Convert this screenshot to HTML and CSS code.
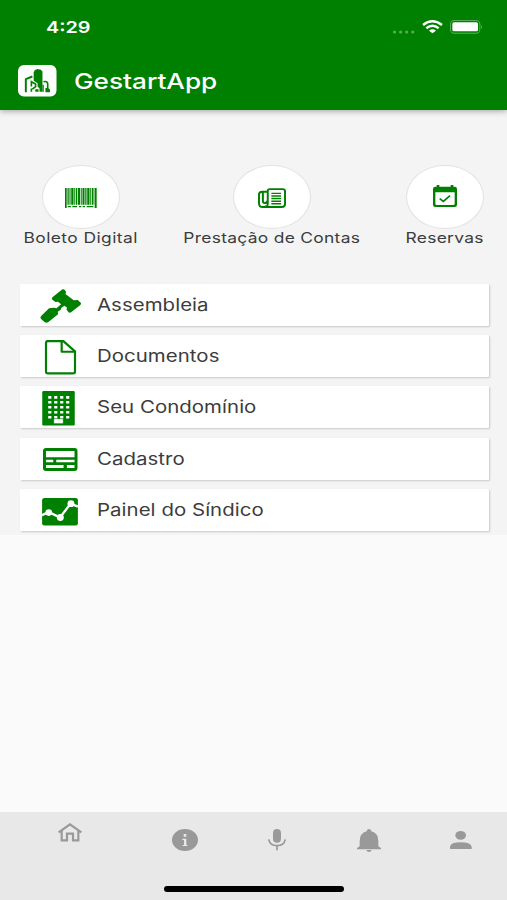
FILE: index.html
```html
<!DOCTYPE html>
<html lang="pt-BR">
<head>
<meta charset="utf-8">
<meta name="viewport" content="width=device-width">
<title>GestartApp</title>
<link rel="stylesheet" href="styles.css">
</head>
<body>
<header class="header">
  <div class="status">
    <span class="time wide">4:29</span>
    <div class="signals">
      <svg class="dots" viewBox="0 0 24 4"><g fill="#fff" opacity=".35"><circle cx="2.5" cy="2" r="1.6"/><circle cx="8.6" cy="2" r="1.6"/><circle cx="14.7" cy="2" r="1.6"/><circle cx="20.8" cy="2" r="1.6"/></g></svg>
      <svg class="wifi" viewBox="0 0 63 40" fill="none" stroke="#fff" stroke-width="7.5"><path d="M3 15Q31 -7 60 15"/><path d="M13 25Q31 10 50 25"/><path d="M21 32Q31 23 42 32L31.500 40Z" fill="#fff" stroke="none"/></svg>
      <svg class="battery" viewBox="0 0 98 41"><rect x="1.500" y="1.500" width="88" height="38" rx="11" fill="none" stroke="#fff" stroke-width="3" opacity=".35"/><rect x="7" y="7" width="77" height="27" rx="5" fill="#fff"/><path d="M93 15q5 6 0 12z" fill="#fff" opacity=".5"/></svg>
    </div>
  </div>
  <div class="brand">
    <svg class="logo" viewBox="0 0 118 96"><rect width="118" height="96" rx="18" fill="#fff"/><path fill="#008000" d="M48 22L52 15L60 12L70 14L75 20V82H66V72L60 66V56L48 48Z"/><path d="M24 83V43L44 35" fill="none" stroke="#008000" stroke-width="6"/><path d="M41 82V72M41 66V51L54 58V66L44 74" fill="none" stroke="#008000" stroke-width="5"/><path fill="#008000" d="M53 74H63V82H53ZM84 70H93L98 75V83H84Z"/><path d="M78 51Q90 48 91 57V70" fill="none" stroke="#008000" stroke-width="5"/><path d="M77 82V60" fill="none" stroke="#008000" stroke-width="4"/></svg>
    <h1 class="title wide">GestartApp</h1>
  </div>
</header>

<main class="home">
  <nav class="shortcuts">
    <a class="shortcut digital">
      <span class="bubble"><svg class="barcode" viewBox="0 0 96 60"><g fill="#008000"><path d="M0 0h5v60H0zM8 0h3v50H8zM14 0h2v50h-2zM19 0h6v50h-6zM28 0h2v50h-2zM33 0h3v50h-3zM39 0h6v50h-6zM48 0h2v50h-2zM53 0h5v50h-5zM61 0h3v50h-3zM67 0h6v50h-6zM76 0h2v50h-2zM81 0h4v50h-4zM89 0h6v60h-6z"/><path d="M8 54h10v4H8zM22 54h14v4H22zM42 54h7v4h-7zM53 54h7v4h-7zM65 54h20v4H65z"/></g><path d="M5 0h84v50H5z" fill="#008000" opacity=".3"/></svg></span>
      <span class="caption wide">Boleto Digital</span>
    </a>
    <a class="shortcut contas">
      <span class="bubble"><svg class="news" viewBox="0 0 86 62" fill="none" stroke="#008000" stroke-width="6"><path d="M30 10V8Q30 3 36 3H76Q83 3 83 10V49Q83 58 73 58H15Q3 58 3 46V20Q3 11 13 11H27M30 10V48Q30 58 20 56M15 12V39Q15 46 21 46T28 39"/><path stroke-width="4.500" d="M41 16H71M41 24H71M41 32H71M41 40H71M41 48H71"/></svg></span>
      <span class="caption wide">Prestação de Contas</span>
    </a>
    <a class="shortcut reservas">
      <span class="bubble"><svg class="calendar" viewBox="0 0 72 66"><path fill="#008000" fill-rule="evenodd" d="M11 0h8v5h34V0h8v5h4q7 0 7 7v47q0 7-7 7H7q-7 0-7-7V12q0-7 7-7h4zM7 22v34q0 4 4 4h50q4 0 4-4V22z"/><path d="M20 41L31 49L51 32" fill="none" stroke="#008000" stroke-width="5"/></svg></span>
      <span class="caption wide">Reservas</span>
    </a>
  </nav>

  <ul class="menu">
    <li class="card"><span class="glyph"><svg class="gavel" viewBox="91 41 124 102"><path fill="#008000" d="M158 42Q162 40 166 45L169 50L167 56L192 75L204 74L213 82Q216 86 211 90L184 111Q179 114 175 109L170 102L172 97L164 91L155 97L153 103L144 109L145 117L116 140Q110 145 104 140L94 131Q89 126 95 121L118 99L132 97L140 99L154 87L145 79L137 80L128 73Q124 69 129 65Z"/></svg></span><span class="label wide">Assembleia</span></li>
    <li class="card"><span class="glyph"><svg class="file" viewBox="0 0 93 103" fill="none" stroke="#008000" stroke-width="6.500" stroke-linejoin="round"><path d="M8 3H55L90 34V95Q90 100 84 100H9Q3 100 3 95V9Q3 3 8 3Z"/><path d="M50 4V35H89"/></svg></span><span class="label wide">Documentos</span></li>
    <li class="card"><span class="glyph"><svg class="building" viewBox="0 0 98 104"><rect width="98" height="104" rx="4" fill="#008000"/><path d="M18 19H82M18 34H82M18 49H82M18 64H82M18 79H82" stroke="#fff" stroke-width="8" stroke-dasharray="9.500 8.500"/><path d="M35 84h28v14H35z" fill="#fff" stroke="#008000" stroke-width="1"/></svg></span><span class="label wide">Seu Condomínio</span></li>
    <li class="card"><span class="glyph"><svg class="form" viewBox="0 0 104 69"><path fill="#008000" fill-rule="evenodd" d="M9 0H95Q104 0 104 9V60Q104 69 95 69H9Q0 69 0 60V9Q0 0 9 0ZM9 9V28H95V9ZM9 35V43H31V35ZM40 35V43H95V35ZM9 51V60H62V51ZM72 51V60H95V51Z"/></svg></span><span class="label wide">Cadastro</span></li>
    <li class="card"><span class="glyph"><svg class="chart" viewBox="0 0 108 83"><rect width="108" height="83" rx="7" fill="#008000"/><g fill="#fff"><path d="M0 52L19 42L54 59L86 17L108 26" fill="none" stroke="#fff" stroke-width="7"/><circle cx="20" cy="44" r="10"/><circle cx="55" cy="59" r="10.500"/><circle cx="87" cy="17" r="10.500"/></g></svg></span><span class="label wide">Painel do Síndico</span></li>
  </ul>
</main>

<footer class="tabs">
  <nav class="tabrow">
    <svg class="tab house" viewBox="0 0 72 56" fill="none" stroke="#999" stroke-width="6.500"><path d="M2 28L36 4L70 28M11 24V52H27V32H45V52H61V24"/></svg>
    <svg class="tab info" viewBox="0 0 78 66"><ellipse cx="39" cy="33" rx="39" ry="33" fill="#999"/><path d="M35 15h8v8h-8zM31 29h12v19h3v3H32v-3h4V33h-5z" fill="#e8e8e8"/></svg>
    <svg class="tab mic" viewBox="0 0 54 64"><rect x="15" width="24" height="41" rx="12" fill="#999"/><path d="M2 31Q6 50 27 50T52 31M27 50V64" fill="none" stroke="#999" stroke-width="5"/></svg>
    <svg class="tab bell" viewBox="0 0 72 69" fill="#999"><path d="M29 7Q30 0 36 0T43 7Q64 13 64 36V52L72 57V61H0V57L8 52V36Q8 13 29 7ZM28 63H44Q42 69 36 69T28 63Z"/></svg>
    <svg class="tab person" viewBox="0 0 65 54" fill="#999"><ellipse cx="32" cy="13" rx="16" ry="13"/><path d="M0 54V47Q2 34 32 34T65 47V54Z"/></svg>
  </nav>
  <div class="indicator"></div>
</footer>
</body>
</html>
```
FILE: styles.css
```css
* { box-sizing: border-box; }
body {
  margin: 0;
  width: 507px;
  height: 900px;
  display: flex;
  flex-direction: column;
  background: #fafafa;
  font-family: Inter, "Liberation Sans", sans-serif;
  color: #3c3c3c;
  overflow: hidden;
}
svg { display: block; overflow: visible; flex: none; }
.wide { display: inline-block; white-space: nowrap; transform: scaleX(1.2); transform-origin: left center; }

.header {
  height: 110px;
  flex: none;
  background: #008000;
  color: #fff;
  box-shadow: 0 1px 6px rgba(0, 0, 0, .35);
  z-index: 1;
}
.status { height: 54px; display: flex; justify-content: space-between; align-items: center; padding: 0 24px 0 46px; }
.time { font-size: 16.500px; font-weight: 600; line-height: 20px; }
.signals { display: flex; align-items: center; }
.dots { width: 24px; height: 4px; margin: 9px 6px 0 0; }
.wifi { width: 21px; height: 13.300px; margin-right: 7px; }
.battery { width: 32.700px; height: 13.700px; }
.brand { height: 54px; display: flex; align-items: center; padding-left: 18px; gap: 17px; }
.logo { width: 38.500px; height: 31.500px; }
.title { margin: 0; font-size: 21.800px; font-weight: 500; line-height: 28px; }

.home { height: 425px; flex: none; padding: 55px 18px 0 19px; background: #f4f4f4; }
.shortcuts { display: flex; justify-content: space-between; padding: 0 5px; }
.shortcut { display: flex; flex-direction: column; align-items: center; }
.digital { width: 114px; }
.contas { width: 177px; }
.reservas { width: 78px; }
.bubble {
  width: 78px;
  height: 64px;
  display: flex;
  align-items: center;
  justify-content: center;
  border: 1px solid #e2e2e2;
  border-radius: 50%;
  background: #fff;
}
.caption { font-size: 14.500px; line-height: 18px; letter-spacing: .25px; transform-origin: center; }
.digital .caption { letter-spacing: .35px; }
.contas { position: relative; left: -.5px; }
.barcode { width: 32px; height: 20px; margin-top: 2px; }
.news { width: 28px; height: 20.500px; margin-top: 2px; }
.calendar { width: 24px; height: 22px; margin-bottom: 3px; }

.menu { list-style: none; margin: 37px 0 0; padding: 0 0 0 1px; display: grid; gap: 9.200px; }
.card {
  height: 42px;
  display: flex;
  align-items: center;
  background: #fff;
  box-shadow: 1px 1px 2px rgba(0, 0, 0, .18);
  border-radius: 1px;
}
.glyph { width: 77px; padding-left: 2px; display: flex; justify-content: center; }
.label { font-size: 17px; line-height: 20px; letter-spacing: .04px; }
.gavel { width: 41.500px; height: 34px; margin: 1px 0 0 3px; }
.file { width: 31px; height: 34.500px; margin: 3px 0 0 2px; }
.building { width: 33px; height: 34.500px; margin: 1px 2px 0 0; }
.form { width: 34.500px; height: 23px; margin: 2px 0 0 2px; }
.chart { width: 36px; height: 27.500px; margin: 4px 0 0; }

.tabs { margin-top: auto; height: 88px; background: #e8e8e8; display: flex; flex-direction: column; align-items: center; }
.tabrow { width: 100%; height: 74px; padding: 0 35px 0 58px; display: flex; align-items: flex-start; }
.house { width: 24px; height: 18.700px; margin-top: 11px; }
.info { width: 26px; height: 22px; margin: 17px 0 0 90px; }
.mic { width: 18px; height: 21.300px; margin: 17px 0 0 70px; }
.bell { width: 24px; height: 23px; margin: 17px 0 0 71px; }
.person { width: 21.700px; height: 18px; margin: 19px 0 0 69px; }
.indicator { width: 180px; height: 6px; border-radius: 3px; background: #000; }
```
